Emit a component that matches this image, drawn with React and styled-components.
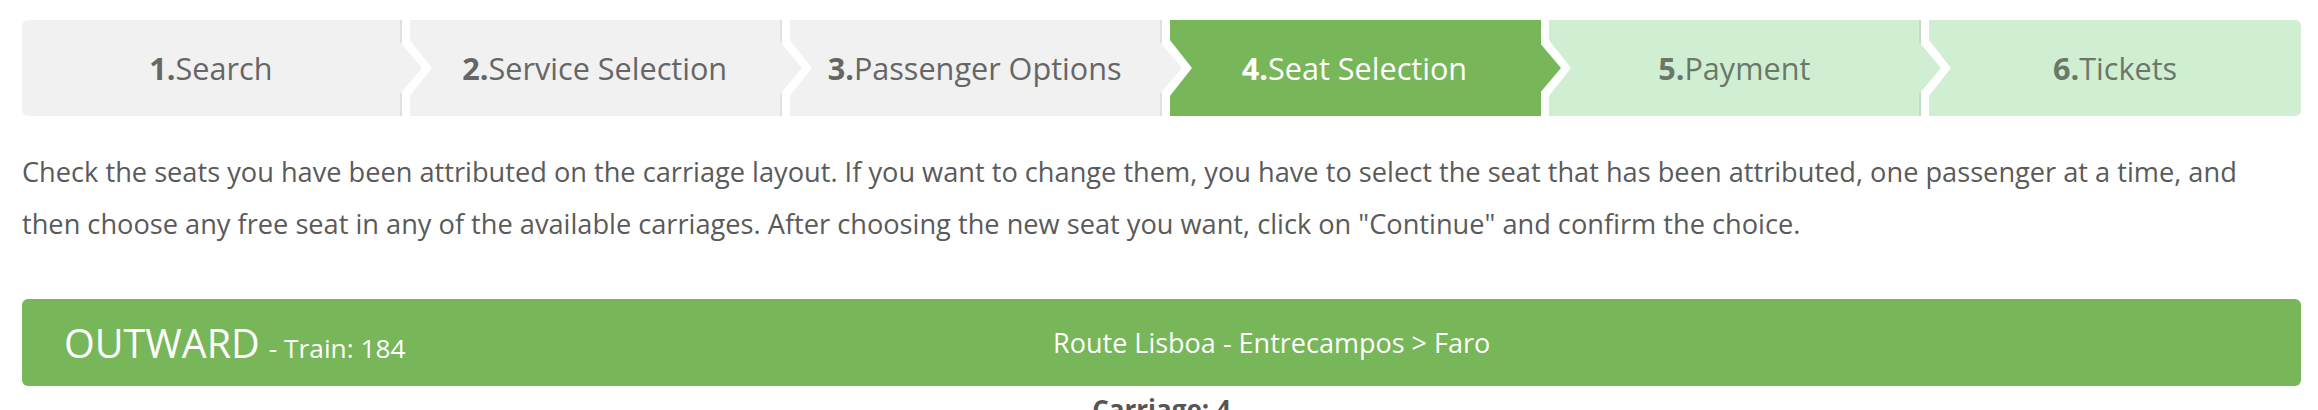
import React from "react";
import styled, { createGlobalStyle, css } from "styled-components";

const Global = createGlobalStyle`
  html, body { margin: 0; padding: 0; background: #ffffff; }
  body { font-family: "Open Sans", "Noto Sans", sans-serif; }
  * { box-sizing: border-box; }
`;

const palette = {
  done: { bg: "#f1f1f1", fg: "#666666", edge: "#e0e0e0" },
  active: { bg: "#77b659", fg: "#ffffff", edge: "#77b659" },
  todo: { bg: "#d0efd2", fg: "#6a786a", edge: "#c2dcc4" },
};

const Page = styled.div`
  padding: 20px 17px 0 22px;
`;

const Steps = styled.ol`
  list-style: none;
  margin: 0;
  padding: 0;
  display: grid;
  grid-template-columns: repeat(6, 1fr);
  height: 96px;
`;

const Step = styled.li`
  position: relative;
  display: flex;
  align-items: center;
  justify-content: center;
  background: ${(p) => palette[p.$state].bg};
  color: ${(p) => palette[p.$state].fg};
  border-right: 2px solid ${(p) => palette[p.$state].edge};
  border-left: ${(p) => (p.$first ? "0" : "8px solid #ffffff")};
  font-size: 30.6px;
  white-space: nowrap;
  ${(p) => p.$first && css`border-radius: 6px 0 0 6px;`}
  ${(p) =>
    p.$last &&
    css`
      border-radius: 0 6px 6px 0;
      border-right: 0;
    `}
  ${(p) =>
    !p.$last &&
    css`
      &::before,
      &::after {
        content: "";
        position: absolute;
        top: 50%;
        width: 0;
        height: 0;
        border-style: solid;
        border-color: transparent;
      }
      &::before {
        z-index: 1;
        left: calc(100% + 2px);
        margin-top: -38px;
        border-width: 38px 0 38px 30px;
        border-left-color: #ffffff;
      }
      &::after {
        z-index: 2;
        left: 100%;
        margin-top: -26px;
        border-width: 26px 0 26px 22px;
        border-left-color: ${palette[p.$state].bg};
      }
    `}
`;

const StepNum = styled.b`
  font-weight: 700;
`;

const Intro = styled.p`
  margin: 30px 0 0;
  font-size: 27.2px;
  line-height: 52px;
  color: #5a5a5a;
`;

const Journey = styled.section`
  margin-top: 49px;
  height: 87px;
  background: #77b659;
  border-radius: 6px;
  color: #ffffff;
  display: grid;
  grid-template-columns: 33.333% 43% 1fr;
  align-items: center;
`;

const Direction = styled.div`
  padding-left: 42px;
  display: flex;
  align-items: baseline;
  gap: 9px;
  white-space: nowrap;
`;

const DirTitle = styled.span`
  font-size: 39.5px;
`;

const TrainInfo = styled.span`
  font-size: 26.3px;
`;

const Route = styled.div`
  text-align: center;
  font-size: 27px;
  white-space: nowrap;
`;

const Carriage = styled.h3`
  margin: 8px 0 0;
  text-align: center;
  font-size: 26px;
  line-height: 1.2;
  font-weight: 700;
  color: #555555;
`;

const steps = [
  { n: 1, label: "Search", state: "done" },
  { n: 2, label: "Service Selection", state: "done" },
  { n: 3, label: "Passenger Options", state: "done" },
  { n: 4, label: "Seat Selection", state: "active" },
  { n: 5, label: "Payment", state: "todo" },
  { n: 6, label: "Tickets", state: "todo" },
];

export default function App() {
  return (
    <>
      <Global />
      <Page>
        <Steps>
          {steps.map((s, i) => (
            <Step
              key={s.n}
              $state={s.state}
              $first={i === 0}
              $last={i === steps.length - 1}
            >
              <StepNum>{s.n}.</StepNum>
              {s.label}
            </Step>
          ))}
        </Steps>
        <Intro>
          Check the seats you have been attributed on the carriage layout. If
          you want to change them, you have to select the seat that has been
          attributed, one passenger at a time, and
          <br />
          then choose any free seat in any of the available carriages. After
          choosing the new seat you want, click on "Continue" and confirm the
          choice.
        </Intro>
        <Journey>
          <Direction>
            <DirTitle>OUTWARD</DirTitle>
            <TrainInfo>- Train: 184</TrainInfo>
          </Direction>
          <Route>Route Lisboa - Entrecampos &gt; Faro</Route>
        </Journey>
        <Carriage>Carriage: 4</Carriage>
      </Page>
    </>
  );
}
